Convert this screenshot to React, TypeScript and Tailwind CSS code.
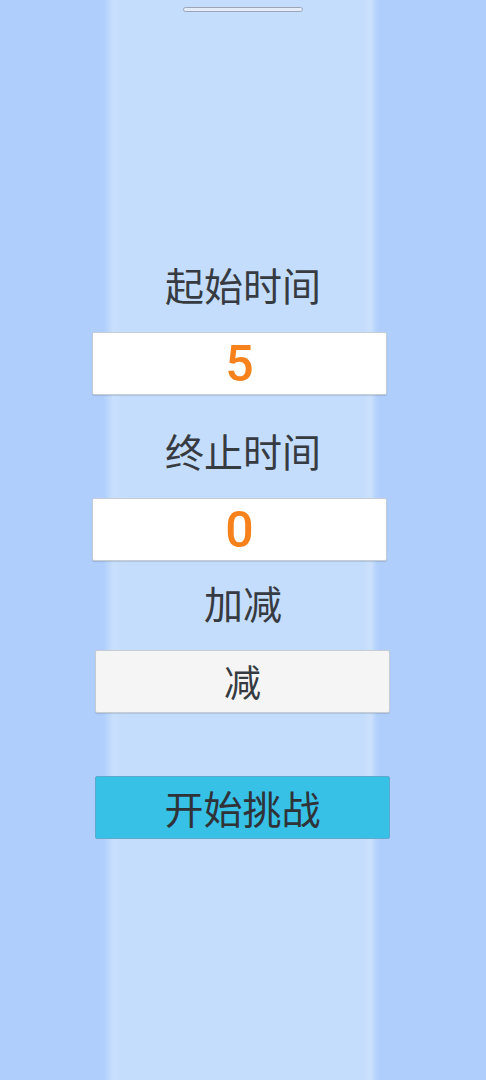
export default function App() {
  return (
    <div
      className="relative w-[486px] h-[1080px] overflow-hidden bg-[linear-gradient(to_right,#afcefc_0px,#afcefc_103px,#bad6fc_108px,#c9e0fd_113px,#c5ddfc_122px,#c5ddfc_364px,#cbe1fd_371px,#b6d3fc_376px,#afcefc_380px,#afcefc_486px)]"
      style={{ fontFamily: '"Noto Sans CJK SC", "Noto Sans", sans-serif' }}
    >
      {/* drag handle */}
      <div className="absolute left-[183px] top-[7px] w-[120px] h-[5px] rounded-full border border-[#9aa6b8] bg-[#e3ecf8]" />

      <div className="flex flex-col pt-[260px]">
        <div className="h-[48px] flex items-center justify-center text-[39px] text-[#363b42] leading-none">起始时间</div>
        <div className="mt-[24px] ml-[92px] w-[295px] h-[63px] bg-white border border-[#c6ccd4] rounded-[2px] shadow-[0_1px_1px_rgba(0,0,0,0.12)] flex items-center justify-center">
          <span className="text-[50px] font-medium text-[#f7821b] leading-none" style={{ fontFamily: 'Roboto, "Liberation Sans", sans-serif' }}>5</span>
        </div>

        <div className="mt-[31px] h-[48px] flex items-center justify-center text-[39px] text-[#363b42] leading-none">终止时间</div>
        <div className="mt-[24px] ml-[92px] w-[295px] h-[63px] bg-white border border-[#c6ccd4] rounded-[2px] shadow-[0_1px_1px_rgba(0,0,0,0.12)] flex items-center justify-center">
          <span className="text-[50px] font-medium text-[#f7821b] leading-none" style={{ fontFamily: 'Roboto, "Liberation Sans", sans-serif' }}>0</span>
        </div>

        <div className="mt-[17px] h-[48px] flex items-center justify-center text-[39px] text-[#363b42] leading-none">加减</div>
        <div className="mt-[24px] ml-[95px] w-[295px] h-[63px] bg-[#f5f5f5] border border-[#c6ccd4] rounded-[2px] shadow-[0_1px_1px_rgba(0,0,0,0.12)] flex items-center justify-center">
          <span className="text-[37px] text-[#363b42] leading-none">减</span>
        </div>

        <div className="mt-[63px] ml-[95px] w-[295px] h-[63px] bg-[#37c1e7] border border-[#5fa9cc] rounded-[2px] flex items-center justify-center">
          <span className="text-[39px] text-[#2f3338] leading-none">开始挑战</span>
        </div>
      </div>
    </div>
  );
}
